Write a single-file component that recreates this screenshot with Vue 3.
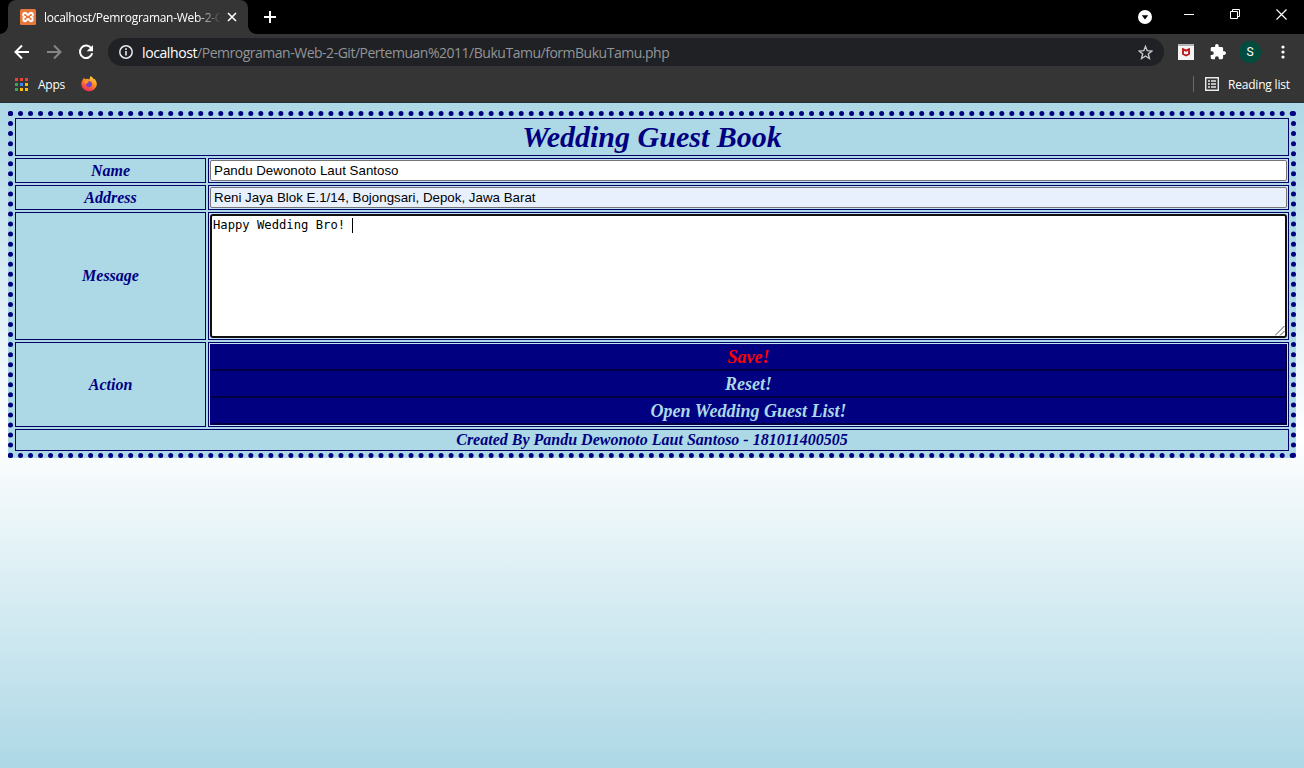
<script setup>
const appColors = ['#ea4335', '#ea4335', '#ea4335', '#34a853', '#4285f4', '#fbbc05', '#34a853', '#fbbc05', '#fbbc05']
const name = 'Pandu Dewonoto Laut Santoso'
const address = 'Reni Jaya Blok E.1/14, Bojongsari, Depok, Jawa Barat'
</script>

<template>
  <div class="window">
    <header class="chrome">
      <div class="tabs">
        <div class="tab">
          <svg class="xampp" width="16" height="16" viewBox="0 0 16 16">
            <rect width="16" height="16" rx="1.500" fill="#e8783a" />
            <g fill="none" stroke="#fff" stroke-width="2" stroke-linejoin="round">
              <path d="M3.600 7.300C2.600 5.500 3.300 3.800 5 3.800c1.800 0 1.800 2.200 3 2.200s1.200-2.200 3-2.200c1.700 0 2.400 1.700 1.400 3.500" />
              <path d="M5.800 7.900H4.400C3.200 8.500 2.700 12.200 5 12.200c1.800 0 1.800-2.200 3-2.200s1.200 2.200 3 2.200c2.300 0 1.800-3.700.6-4.300h-1.400" />
            </g>
          </svg>
          <span class="tab-title">localhost/Pemrograman-Web-2-G</span>
          <svg class="tab-close" width="10" height="10" viewBox="0 0 10 10"><path d="M1 1l8 8M9 1L1 9" stroke="#fff" stroke-width="1.600" /></svg>
        </div>
        <svg class="plus" width="12" height="12" viewBox="0 0 12 12"><path d="M6 0v12M0 6h12" stroke="#fff" stroke-width="2" /></svg>
        <div class="controls">
          <svg class="drop" width="14" height="14" viewBox="0 0 14 14"><circle cx="7" cy="7" r="7" fill="#fff" /><path d="M3.800 5.200h6.400L7 9.400z" fill="#000" /></svg>
          <svg class="mini" width="10" height="10" viewBox="0 0 10 10"><path d="M0 5.500h10" stroke="#fff" /></svg>
          <svg class="restore" width="10" height="10" viewBox="0 0 10 10"><path d="M.5 2.500h7v7h-7zM2.500 2.500v-2h7v7h-2" fill="none" stroke="#fff" /></svg>
          <svg class="close" width="11" height="11" viewBox="0 0 11 11"><path d="M.5.5l10 10M10.500.5l-10 10" stroke="#fff" stroke-width="1.200" /></svg>
        </div>
      </div>
      <div class="toolbar">
        <svg class="back" width="16" height="16" viewBox="0 0 16 16"><path d="M15 8H2M8 1.500L1.500 8 8 14.500" fill="none" stroke="#fff" stroke-width="2" /></svg>
        <svg class="forward" width="16" height="16" viewBox="0 0 16 16"><path d="M1 8h13M8 1.500L14.500 8 8 14.500" fill="none" stroke="#858687" stroke-width="2" /></svg>
        <svg class="reload" width="16" height="16" viewBox="0 0 16 16"><path d="M13.300 4.300A6.200 6.200 0 1 0 14.200 9.300" fill="none" stroke="#fff" stroke-width="2" /><path d="M15 1v6.300H8.700z" fill="#fff" /></svg>
        <div class="omnibox">
          <svg class="info" width="14" height="14" viewBox="0 0 14 14"><circle cx="7" cy="7" r="6.200" fill="none" stroke="#e8eaed" stroke-width="1.500" /><path d="M7 6v4.500M7 3.300v1.600" stroke="#e8eaed" stroke-width="1.600" /></svg>
          <span class="url"><b>localhost</b>/Pemrograman-Web-2-Git/Pertemuan%2011/BukuTamu/formBukuTamu.php</span>
          <svg class="star" width="15" height="15" viewBox="0 0 15 15"><path d="M7.500 1.400l1.700 4.300 4.600.3-3.500 3 1.100 4.500-3.900-2.500-3.900 2.500L4.700 9 1.200 6l4.600-.3z" fill="none" stroke="#c4c7c9" stroke-width="1.400" /></svg>
        </div>
        <svg class="shield" width="16" height="16" viewBox="0 0 16 16"><rect width="16" height="16" fill="#f4f4f4" /><path d="M0 0h16v2H0z" fill="#aeb6bc" /><path d="M5 5.200l3 1.500 3-1.500v4.800l-3 1.500-3-1.500z" fill="none" stroke="#c01818" stroke-width="1.900" /></svg>
        <svg class="puzzle" width="16" height="16" viewBox="1 1 22 22"><path fill="#fff" d="M20.500 11H19V7c0-1.100-.9-2-2-2h-4V3.500a2.500 2.500 0 0 0-5 0V5H4c-1.100 0-2 .9-2 2v3.800h1.500a2.700 2.700 0 0 1 0 5.400H2V20c0 1.100.9 2 2 2h3.800v-1.500a2.700 2.700 0 0 1 5.400 0V22H17c1.100 0 2-.9 2-2v-4h1.500a2.500 2.500 0 0 0 0-5z" /></svg>
        <span class="avatar">S</span>
        <svg class="kebab" width="4" height="14" viewBox="0 0 4 14" fill="#fff"><circle cx="2" cy="2" r="1.600" /><circle cx="2" cy="7" r="1.600" /><circle cx="2" cy="12" r="1.600" /></svg>
      </div>
      <div class="bookmarks">
        <div class="apps-grid"><i v-for="(c, i) in appColors" :key="i" :style="{ background: c }"></i></div>
        <span class="apps-label">Apps</span>
        <svg class="firefox" width="16" height="16" viewBox="0 0 16 16">
          <defs>
            <linearGradient id="fire" x1=".8" y1="0" x2=".25" y2="1"><stop offset="0" stop-color="#ffe04a" /><stop offset=".45" stop-color="#ff8a20" /><stop offset="1" stop-color="#f0245c" /></linearGradient>
          </defs>
          <path d="M2 3.500L3 1.800 4.200 3.300 6 2.800 8.300 3.500 9.500 0C11 1 12.300 2.200 12.800 3.300l.8-.3C15.300 4.800 16 7 15.800 9A7.800 7.200 0 0 1 .3 8.500C.2 6.500 1 4.800 2 3.500z" fill="url(#fire)" />
          <circle cx="8" cy="8.200" r="3" fill="#7542c9" />
          <path d="M3 5.500c2-1 3.500 0 5 .4-1 .8-2.600 1-2.400 2.400C4.500 8 3.500 7 3 5.500z" fill="#ff9a22" />
        </svg>
        <span class="divider"></span>
        <svg class="list" width="14" height="14" viewBox="0 0 14 14"><path d="M.7.7h12.600v12.600H.7z" fill="none" stroke="#e8eaed" stroke-width="1.400" /><path d="M3 4h2M3 7h2M3 10h2M6 4h5M6 7h5M6 10h5" stroke="#e8eaed" stroke-width="1.500" /></svg>
        <span class="reading">Reading list</span>
      </div>
    </header>

    <main class="page">
      <form class="book" @submit.prevent>
        <h1 class="cell wide title">Wedding Guest Book</h1>
        <label class="cell">Name</label>
        <div class="cell field"><div class="input">{{ name }}</div></div>
        <label class="cell">Address</label>
        <div class="cell field"><div class="input filled">{{ address }}</div></div>
        <label class="cell">Message</label>
        <div class="cell field">
          <div class="area">
            <span>Happy Wedding Bro!&nbsp;</span><i class="caret"></i>
            <svg class="grip" width="10" height="10" viewBox="0 0 10 10"><path d="M0 9.500L9.500 0M5 9.500L9.500 5" stroke="#555" fill="none" /></svg>
          </div>
        </div>
        <label class="cell">Action</label>
        <div class="cell field actions">
          <button class="save">Save!</button>
          <button>Reset!</button>
          <button>Open Wedding Guest List!</button>
        </div>
        <div class="cell wide foot">Created By Pandu Dewonoto Laut Santoso - 181011400505</div>
      </form>
    </main>
  </div>
</template>

<style>
body { margin: 0; }
</style>

<style scoped>
* { box-sizing: border-box; }
.window { width: 1304px; height: 768px; display: flex; flex-direction: column; overflow: hidden; }
svg { display: block; flex: none; }
.chrome { height: 103px; background: #353535; color: #fff; font-family: "Open Sans", "Noto Sans", sans-serif; font-size: 12px; border-bottom: 1px solid #253033; }
.tabs { height: 34px; background: #000; display: flex; align-items: flex-start; }
.tab { position: relative; width: 240px; height: 34px; margin-left: 8px; background: #353535; border-radius: 8px 8px 0 0; display: flex; align-items: center; padding-left: 12px; }
.tab::before, .tab::after { content: ""; position: absolute; bottom: 0; width: 8px; height: 8px; }
.tab::before { left: -8px; background: radial-gradient(circle at 0 0, transparent 7.500px, #353535 8px); }
.tab::after { right: -8px; background: radial-gradient(circle at 100% 0, transparent 7.500px, #353535 8px); }
.tab-title { width: 179px; margin-left: 8px; white-space: nowrap; letter-spacing: -0.280px; -webkit-mask-image: linear-gradient(90deg, #000 152px, transparent 177px); mask-image: linear-gradient(90deg, #000 152px, transparent 177px); }
.tab-close { margin-left: 4px; }
.plus { margin: 11px 0 0 16px; }
.controls { display: flex; margin-left: auto; }
.drop { margin: 10px 32px 0 0; }
.mini { margin: 9px 36px 0 0; }
.restore { margin: 9px 36px 0 0; }
.close { margin: 9px 17px 0 0; }
.toolbar { height: 36px; display: flex; align-items: center; padding-left: 14px; }
.forward { margin-left: 16px; }
.reload { margin-left: 16px; }
.omnibox { width: 1056px; height: 28px; margin-left: 14px; border-radius: 14px; background: #202124; display: flex; align-items: center; padding: 0 11px; }
.url { margin-left: 9px; font-size: 14px; letter-spacing: -0.485px; color: #929599; white-space: nowrap; }
.url b { font-weight: 400; color: #fff; letter-spacing: -0.400px; }
.star { margin-left: auto; }
.shield { margin-left: 14px; }
.puzzle { margin-left: 16px; }
.avatar { width: 22px; height: 22px; margin-left: 13px; border-radius: 50%; background: #004d40; text-align: center; line-height: 22px; font-family: Roboto, sans-serif; font-size: 12px; }
.kebab { margin-left: 20px; }
.bookmarks { height: 28px; display: flex; align-items: center; padding: 0 14px 0 15px; }
.apps-grid { width: 13px; display: grid; grid-template-columns: repeat(3, 3px); gap: 2px; }
.apps-grid i { height: 3px; }
.apps-label { margin-left: 10px; width: 28px; letter-spacing: -0.250px; }
.firefox { margin-left: 15px; }
.divider { margin-left: auto; width: 1px; height: 16px; background: #686a6c; }
.list { margin-left: 11px; }
.reading { margin-left: 9px; width: 62px; white-space: nowrap; letter-spacing: -0.200px; }

.page { flex: 1; padding: 8px; background: linear-gradient(lightblue, white, lightblue); }
.book { height: 347px; border: 5px dotted navy; background: lightblue; padding: 2px; display: grid; grid-template-columns: 191px 1fr; grid-template-rows: 38px 25px 25px 128px 85px 22px; gap: 2px; color: navy; font: italic bold 16px "Liberation Serif", serif; }
.cell { border: 1px solid #000066; margin: 0; display: flex; align-items: center; justify-content: center; min-width: 0; min-height: 0; }
.wide { grid-column: 1 / 3; }
.title { font-size: 30px; line-height: 36px; }
.field { padding: 1px; align-items: stretch; justify-content: stretch; background: #c4e2f2; }
.input { flex: 1; border: 1px solid #767676; border-radius: 2px; background: #fff; color: #000; font: normal 400 13.333px/19px "Liberation Sans", sans-serif; padding-left: 3px; }
.filled { background: #e8f0fe; }
.area { position: relative; flex: 1; display: flex; align-items: flex-start; border: 2px solid #101010; border-radius: 3px; background: #fff; color: #000; font: normal 400 12.200px/15px "DejaVu Sans Mono", monospace; padding: 2px 1px; }
.caret { width: 1px; height: 15px; background: #000; }
.grip { position: absolute; right: 0; bottom: 0; }
.actions { flex-direction: column; }
.actions button { flex: 1; display: block; padding: 0 0 1px; border: 2px solid; border-color: navy #000030 #000040 navy; background: navy; color: lightblue; font: inherit; font-size: 18px; line-height: 21px; }
.actions .save { color: red; }
</style>
